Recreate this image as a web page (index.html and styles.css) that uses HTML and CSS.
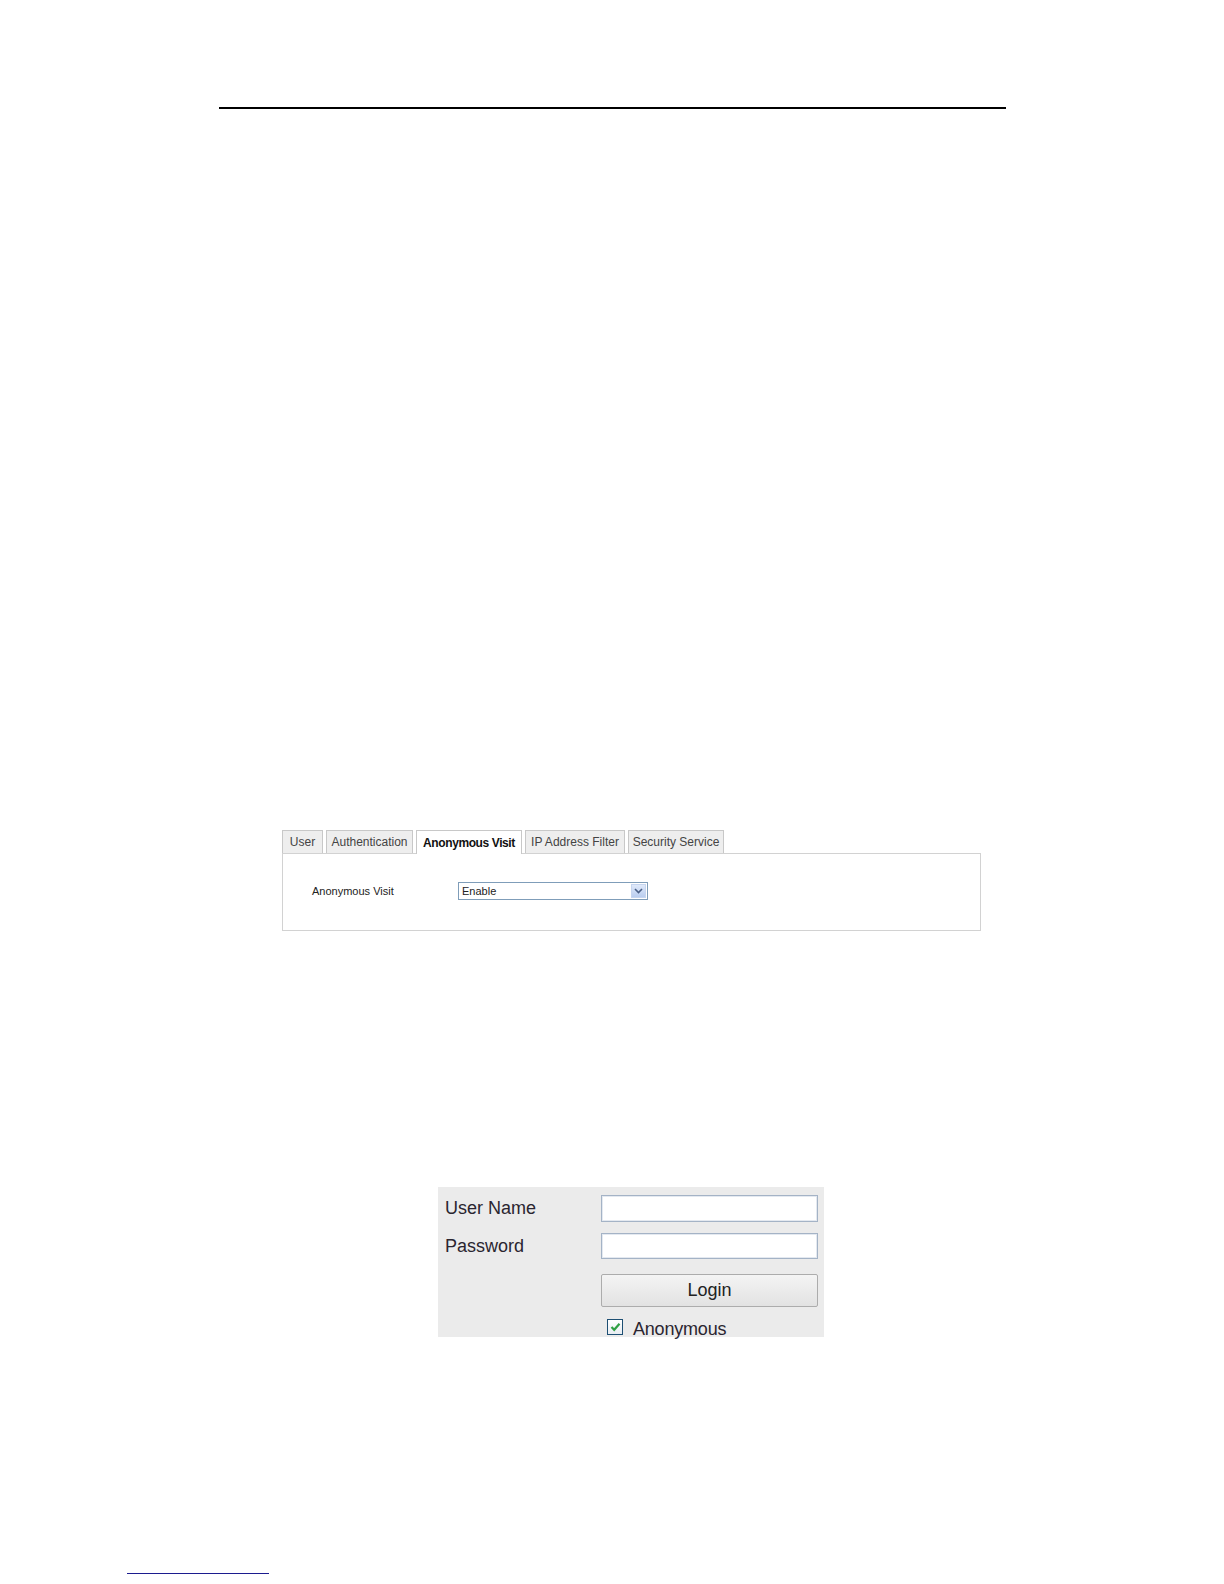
FILE: index.html
```html
<!DOCTYPE html>
<html lang="en">
<head>
  <meta charset="UTF-8" />
  <title>Anonymous Visit</title>
  <link rel="stylesheet" href="styles.css">
</head>
<body>
  <div class="page">
    <div class="rule"></div>

    <section class="settings">
      <nav class="tabs">
        <span class="tab">User</span>
        <span class="tab">Authentication</span>
        <span class="tab active">Anonymous Visit</span>
        <span class="tab">IP Address Filter</span>
        <span class="tab">Security Service</span>
      </nav>
      <div class="panel">
        <div class="field">
          <span class="field-label">Anonymous Visit</span>
          <div class="select">
            <span class="select-value">Enable</span>
            <span class="select-arrow">
              <svg width="9" height="6" viewBox="0 0 9 6"><path d="M1 1 L4.5 4.5 L8 1" fill="none" stroke="#4a5f86" stroke-width="1.6"/></svg>
            </span>
          </div>
        </div>
      </div>
    </section>

    <section class="login">
      <label class="login-label">User Name</label>
      <div class="login-input"></div>
      <label class="login-label">Password</label>
      <div class="login-input short"></div>
      <span></span>
      <button class="login-btn">Login</button>
      <span></span>
      <div class="anon">
        <span class="check">
          <svg width="11" height="10" viewBox="0 0 11 10"><path d="M1.5 5 L4.2 7.8 L9.5 1.8" fill="none" stroke="#2ea043" stroke-width="2.2"/></svg>
        </span>
        <span>Anonymous</span>
      </div>
    </section>

    <div class="foot-link"></div>
  </div>
</body>
</html>
```

FILE: styles.css
```css
* {
  margin: 0;
  padding: 0;
  box-sizing: border-box;
}
body {
  background: #fff;
  font-family: 'Liberation Sans', Arial, sans-serif;
  color: #222;
}
.page {
  width: 1224px;
  min-height: 1584px;
  padding-top: 107px;
}
.rule {
  margin-left: 219px;
  width: 787px;
  height: 2px;
  background: #000;
}

/* settings tabs */
.settings {
  margin: 721px 0 0 282px;
  width: 699px;
}
.tabs {
  display: flex;
  gap: 3px;
  height: 24px;
  position: relative;
  z-index: 1;
}
.tab {
  display: flex;
  align-items: center;
  justify-content: center;
  height: 23px;
  white-space: nowrap;
  font-size: 12px;
  color: #444;
  background: #eeeeee;
  border: 1px solid #c8c8c8;
  border-bottom: none;
}
.tab:nth-child(1) { width: 41px; }
.tab:nth-child(2) { width: 87px; }
.tab:nth-child(3) { width: 106px; }
.tab:nth-child(4) { width: 100px; }
.tab:nth-child(5) { width: 96px; }
.tab.active {
  height: 24px;
  background: #fff;
  color: #111;
  font-weight: bold;
  letter-spacing: -0.4px;
}
.panel {
  margin-top: -1px;
  height: 78px;
  border: 1px solid #d2d2d2;
  padding: 28px 0 0 29px;
}
.field {
  display: flex;
  align-items: center;
  font-size: 11px;
}
.field-label {
  width: 146px;
  color: #222;
}
.select {
  width: 190px;
  height: 18px;
  border: 1px solid #7f9db9;
  display: flex;
  align-items: center;
  justify-content: space-between;
  padding: 0 1px 0 3px;
}
.select-arrow {
  width: 15px;
  height: 14px;
  display: flex;
  align-items: center;
  justify-content: center;
  background: linear-gradient(#dfe9fa, #b9cdef);
  border: 1px solid #c6d5ef;
}

/* login box */
.login {
  margin: 256px 0 0 438px;
  width: 386px;
  height: 150px;
  background: #ebebeb;
  display: grid;
  grid-template-columns: 156px 217px;
  grid-template-rows: 27px 26px 33px 20px;
  row-gap: 11px;
  padding: 8px 6px 0 7px;
  font-size: 18px;
  color: #2a2530;
  align-items: center;
}
.login .login-btn {
  margin-top: 7px;
}
.login-input {
  height: 27px;
  background: #fff;
  border: 1px solid #a4b3c6;
  box-shadow: inset 0 0 0 1px #e4e9f0;
}
.login-input.short {
  height: 26px;
}
.login-btn {
  height: 33px;
  font-family: inherit;
  font-size: 18px;
  color: #222;
  background: linear-gradient(#f4f4f4, #e2e2e2);
  border: 1px solid #acacac;
  border-radius: 2px;
}
.anon {
  display: flex;
  align-items: center;
  gap: 10px;
  padding-left: 6px;
  margin-top: 10px;
  height: 20px;
  letter-spacing: -0.2px;
}
.check {
  width: 16px;
  height: 16px;
  display: flex;
  align-items: center;
  justify-content: center;
  background: linear-gradient(#ffffff, #e8edf2);
  border: 1px solid #1d4f73;
  margin-top: -4px;
}

.foot-link {
  margin: 236px 0 0 127px;
  width: 142px;
  height: 1px;
  background: #1c1c8f;
}
```
